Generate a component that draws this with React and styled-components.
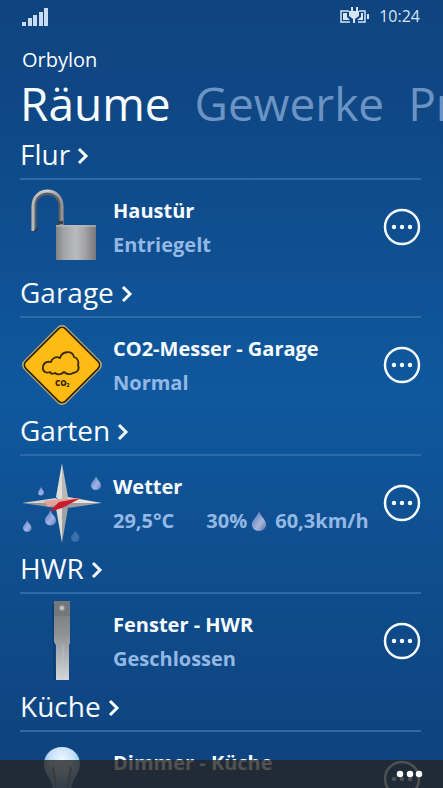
import styled, { createGlobalStyle } from "styled-components";

const rooms = [
  {
    name: "Flur",
    devices: [{ name: "Haustür", state: "Entriegelt", icon: "lock" }],
  },
  {
    name: "Garage",
    devices: [{ name: "CO2-Messer - Garage", state: "Normal", icon: "co2" }],
  },
  {
    name: "Garten",
    devices: [
      {
        name: "Wetter",
        icon: "weather",
        weather: { temp: "29,5°C", humidity: "30%", wind: "60,3km/h" },
      },
    ],
  },
  {
    name: "HWR",
    devices: [{ name: "Fenster - HWR", state: "Geschlossen", icon: "handle" }],
  },
  {
    name: "Küche",
    devices: [{ name: "Dimmer - Küche", state: "Aus", icon: "bulb" }],
  },
];

const pivots = ["Räume", "Gewerke", "Profile"];

const LockIcon = () => (
  <svg viewBox="0 0 80 80" aria-hidden="true">
    <defs>
      <linearGradient id="lockBody" x1="0" x2="1" y1="0" y2="0">
        <stop offset="0" stopColor="#7f8184" />
        <stop offset="0.2" stopColor="#a3a5a8" />
        <stop offset="0.5" stopColor="#b9babc" />
        <stop offset="0.72" stopColor="#a4a4a6" />
        <stop offset="1" stopColor="#77787b" />
      </linearGradient>
      <linearGradient id="lockRing" x1="0" x2="1" y1="0" y2="0">
        <stop offset="0" stopColor="#b4b6b8" />
        <stop offset="0.5" stopColor="#d2d2d2" />
        <stop offset="1" stopColor="#8f9193" />
      </linearGradient>
    </defs>
    <path d="M12 43V19c0-18 27-18 27 0v20" fill="none" stroke="#5c6064" strokeWidth="5" />
    <path d="M11 44V19c0-20 29-20 29 0v19" fill="none" stroke="url(#lockRing)" strokeWidth="3" />
    <path d="M12 44l4-5v4l-3 2z" fill="#2a3b50" />
    <rect x="36" y="34" width="5" height="3" fill="#3b4148" />
    <rect x="34" y="38" width="40" height="35" rx="1" fill="url(#lockBody)" />
    <path d="M34 39h40" stroke="#c0c0c0" strokeWidth="1" />
  </svg>
);

const Co2Icon = () => (
  <svg viewBox="0 0 80 80" aria-hidden="true">
    <rect x="10" y="10" width="60" height="60" rx="6" transform="rotate(45 40 40)" fill="#c0b270" />
    <rect
      x="12"
      y="12"
      width="56"
      height="56"
      rx="5"
      transform="rotate(45 40 40)"
      fill="#fdbb13"
      stroke="#33250d"
      strokeWidth="1.800"
    />
    <path
      d="M28 47c-4 2-8-1-7-5 0-4 4-6 8-5 1-4 5-6 9-4 2-7 12-8 14-1 4 1 5 5 4 8 2 4-1 8-5 8-3 2-7 1-9-1-3 3-7 3-9 1-2 1-4 1-5-1z"
      fill="none"
      stroke="#3a2a0c"
      strokeWidth="1.800"
      strokeLinejoin="round"
    />
    <text x="33" y="61" fontFamily="Open Sans, sans-serif" fontSize="8" fontWeight="800" fill="#33250d">
      CO<tspan fontSize="5" dy="1">2</tspan>
    </text>
  </svg>
);

// raindrop outline for a drop 10 wide and 14 high
const dropPath = "M5 0C6 4 10 6 10 9.500C10 12 8 14 5 14S0 12 0 9.500C0 6 4 4 5 0Z";

const WeatherIcon = () => (
  <svg viewBox="0 0 80 80" aria-hidden="true">
    <defs>
      <linearGradient id="rain" x1="0" x2="1" y1="0" y2="1">
        <stop offset="0" stopColor="#4c78c0" />
        <stop offset="0.6" stopColor="#a3b4e4" />
        <stop offset="1" stopColor="#5579bd" />
      </linearGradient>
    </defs>
    <path d="M40 0l-6 34 6 6z" fill="#e0deda" />
    <path d="M40 0l6 34-6 6z" fill="#bbb9b6" />
    <path d="M80 40l-34-6-6 6z" fill="#e6e3df" />
    <path d="M80 40l-34 5-6-5z" fill="#9b9c9f" />
    <path d="M40 80l6-35-6-5z" fill="#a2a2a5" />
    <path d="M40 80l-6-35 6-5z" fill="#dedcd9" />
    <path d="M0 40l34-5 6 5z" fill="#d6d4d0" />
    <path d="M0 40l34 5 6-5z" fill="#96969a" />
    <path d="M22 38l18-2 19-1-19 6-14 3z" fill="#e5a09a" />
    <path d="M59 35L37 39l-10 10 13-4z" fill="#c81c2d" />
    <path d={dropPath} transform="translate(69 13)" fill="url(#rain)" />
    <path d={dropPath} transform="translate(16 24) scale(.6)" fill="url(#rain)" />
    <path d={dropPath} transform="translate(23 47) scale(1.100)" fill="url(#rain)" />
    <path d={dropPath} transform="translate(1 57) scale(.85)" fill="url(#rain)" />
    <path d={dropPath} transform="translate(49 67) scale(.85)" fill="url(#rain)" opacity="0.35" />
  </svg>
);

const HandleIcon = () => (
  <svg viewBox="0 0 80 80" aria-hidden="true">
    <defs>
      <linearGradient id="handle" x1="0" x2="0" y1="0" y2="1">
        <stop offset="0" stopColor="#74787a" />
        <stop offset="0.4" stopColor="#8d8f91" />
        <stop offset="0.75" stopColor="#b8b9bb" />
        <stop offset="1" stopColor="#d6d7d8" />
      </linearGradient>
    </defs>
    <path d="M30 3h2v40l2 36h-2l-1-36z" fill="#08305e" opacity="0.5" />
    <path d="M32 0h16v42l-1 2v35H34V44l-2-3z" fill="url(#handle)" />
    <path d="M32 0h16v15H32z" fill="#74787a" />
    <path d="M41 44v34" stroke="#c9cacc" opacity="0.5" />
    <circle cx="40" cy="7" r="3" fill="#8f9396" />
    <circle cx="40" cy="7" r="2" fill="#c4c8ca" />
  </svg>
);

const BulbIcon = () => (
  <svg viewBox="0 0 80 80" aria-hidden="true">
    <defs>
      <radialGradient id="bulb" cx="0.5" cy="0.3" r="0.65">
        <stop offset="0" stopColor="#eef8ff" />
        <stop offset="0.5" stopColor="#c6e2f8" />
        <stop offset="1" stopColor="#6aa6dc" />
      </radialGradient>
    </defs>
    <path d="M40 8c-11 0-18 8-18 17 0 10 7 13 9 25h18c2-12 9-15 9-25 0-9-7-17-18-17z" fill="url(#bulb)" />
    <path d="M34 48l-3-20M46 48l3-20" stroke="#7d8890" strokeWidth="2" />
    <rect x="31" y="50" width="18" height="20" rx="3" fill="#a9adb1" />
  </svg>
);

const icons = {
  lock: LockIcon,
  co2: Co2Icon,
  weather: WeatherIcon,
  handle: HandleIcon,
  bulb: BulbIcon,
};

const StatusBar = () => (
  <Status>
    <svg width="28" height="19" viewBox="0 0 28 19" role="img" aria-label="Signal">
      <path d="M0 15h4v4H0zM6 11h4v8H6zM11 8h4v11h-4zM17 5h4v14h-4zM22 1h4v18h-4z" fill="#cbdcf2" />
    </svg>
    <StatusRight>
      <svg width="30" height="18" viewBox="0 0 30 18" role="img" aria-label="Akku lädt">
        <path d="M9 4H1v11h9M18 15h7V4h-6" fill="none" stroke="#d6e4f5" strokeWidth="1.500" />
        <path d="M3 6h4v4l3 3H3zM23 6h-2v4l-4 3h6zM27 7h2v5h-2z" fill="#d6e4f5" />
        <path d="M9 4h2V0h2v4h3V0h2v4h1v5l-4 3v4h-2v-4l-4-3z" fill="#d6e4f5" />
      </svg>
      <time>10:24</time>
    </StatusRight>
  </Status>
);

const DeviceRow = ({ device }) => {
  const Icon = icons[device.icon];
  return (
    <Row>
      <IconBox>
        <Icon />
      </IconBox>
      <Info>
        <DeviceName>{device.name}</DeviceName>
        {device.weather ? (
          <WeatherState>
            <span>{device.weather.temp}</span>
            <Humidity>
              {device.weather.humidity}
              <svg width="16" height="20" viewBox="0 0 10 14" aria-hidden="true">
                <defs>
                  <linearGradient id="humidity" x1="0" x2="1" y1="0" y2="1">
                    <stop offset="0" stopColor="#3f6fb4" />
                    <stop offset="0.6" stopColor="#a9b6dc" />
                    <stop offset="1" stopColor="#54719f" />
                  </linearGradient>
                </defs>
                <path d={dropPath} fill="url(#humidity)" />
              </svg>
            </Humidity>
            <span>{device.weather.wind}</span>
          </WeatherState>
        ) : (
          <State>{device.state}</State>
        )}
      </Info>
      <MoreBtn aria-label={`${device.name} Optionen`}>
        <svg width="38" height="38" viewBox="0 0 38 38" aria-hidden="true">
          <circle cx="19" cy="19" r="17" fill="none" stroke="#f4faff" strokeWidth="2.500" />
          <path d="M11 19h0M19 19h0M27 19h0" stroke="#f4faff" strokeWidth="4.500" strokeLinecap="round" />
        </svg>
      </MoreBtn>
    </Row>
  );
};

export default function App() {
  return (
    <>
      <GlobalStyle />
      <Page>
        <StatusBar />
        <AppName>Orbylon</AppName>
        <Pivots>
          {pivots.map((p, idx) => (
            <PivotBtn key={p} $active={idx === 0}>
              {p}
            </PivotBtn>
          ))}
        </Pivots>
        <List>
          {rooms.map((room) => (
            <section key={room.name}>
              <RoomTitle>
                <RoomLink href={`#${room.name}`}>
                  {room.name}
                  <Chevron width="12" height="18" viewBox="0 0 12 18" aria-hidden="true">
                    <path d="M2 2l7 7-7 7" fill="none" stroke="#f4faff" strokeWidth="3" />
                  </Chevron>
                </RoomLink>
              </RoomTitle>
              {room.devices.map((d) => (
                <DeviceRow key={d.name} device={d} />
              ))}
            </section>
          ))}
        </List>
        <AppBar>
          <AppBarBtn aria-label="Menü">
            <svg width="28" height="10" viewBox="0 0 28 10" aria-hidden="true">
              <path d="M5 5h0M15 5h0M24 5h0" stroke="#fff" strokeWidth="6.500" strokeLinecap="round" />
            </svg>
          </AppBarBtn>
        </AppBar>
      </Page>
    </>
  );
}

const GlobalStyle = createGlobalStyle`
  * {
    box-sizing: border-box;
  }
  body {
    margin: 0;
    background: #0f437d;
    color: #f8fcff;
    font-family: "Open Sans", "Noto Sans", sans-serif;
  }
  button {
    padding: 0;
    border: none;
    background: transparent;
    color: inherit;
    font: inherit;
    cursor: pointer;
  }
  svg {
    display: block;
    flex: none;
  }
`;

const Page = styled.main`
  display: flex;
  flex-direction: column;
  height: 100vh;
  overflow: hidden;
  background: linear-gradient(#0f447f 0%, #0f4886 16%, #0f589e 50%, #0f4a88 80%, #0e427d 100%);
`;

const Status = styled.header`
  display: flex;
  flex: none;
  align-items: center;
  justify-content: space-between;
  height: 32px;
  padding: 0 23px 0 22px;
  color: #d6e4f5;
  font-size: 16px;
`;

const StatusRight = styled.div`
  display: flex;
  align-items: center;
  gap: 9px;
`;

const AppName = styled.div`
  flex: none;
  padding: 15px 22px 0;
  font-size: 20px;
  line-height: 26px;
`;

const Pivots = styled.nav`
  display: flex;
  flex: none;
  gap: 24px;
  padding: 0 0 1px 20px;
  overflow: hidden;
`;

const PivotBtn = styled.button`
  flex: none;
  color: ${(props) => (props.$active ? "#f8fcff" : "#6b93c3")};
  font-size: 46px;
  line-height: 60px;
  white-space: nowrap;
`;

const List = styled.div`
  flex: 1;
  min-height: 0;
  padding: 0 22px 28px 20px;
  overflow-y: auto;
  scrollbar-width: none;
`;

const RoomTitle = styled.h2`
  height: 46px;
  margin: 0;
  border-bottom: 2px solid #3069a9;
  font-size: 28px;
  font-weight: 400;
  line-height: 40px;
`;

const RoomLink = styled.a`
  display: inline-flex;
  align-items: center;
  gap: 7px;
  color: inherit;
  text-decoration: none;
`;

const Chevron = styled.svg`
  margin-top: 4px;
`;

const Row = styled.div`
  display: flex;
  align-items: center;
  height: 92px;
  padding: 2px 0 0 2px;
`;

const IconBox = styled.div`
  flex: none;
  width: 80px;
  height: 80px;
`;

const Info = styled.div`
  flex: 1;
  min-width: 0;
  padding: 2px 0 0 11px;
  font-size: 20px;
  font-weight: 700;
  line-height: 34px;
  white-space: nowrap;
`;

const DeviceName = styled.div`
  color: #f8fcff;
`;

const State = styled.div`
  color: #94b8e4;
`;

const WeatherState = styled(State)`
  display: flex;
  gap: 8px;
`;

const Humidity = styled.span`
  display: flex;
  align-items: center;
  gap: 4px;
  margin-left: 24px;
`;

const MoreBtn = styled.button`
  flex: none;
`;

const AppBar = styled.footer`
  position: fixed;
  right: 0;
  bottom: 0;
  left: 0;
  display: flex;
  justify-content: flex-end;
  height: 28px;
  padding-right: 20px;
  background: rgba(38, 38, 38, 0.8);
`;

const AppBarBtn = styled.button`
  display: flex;
  align-items: center;
`;
